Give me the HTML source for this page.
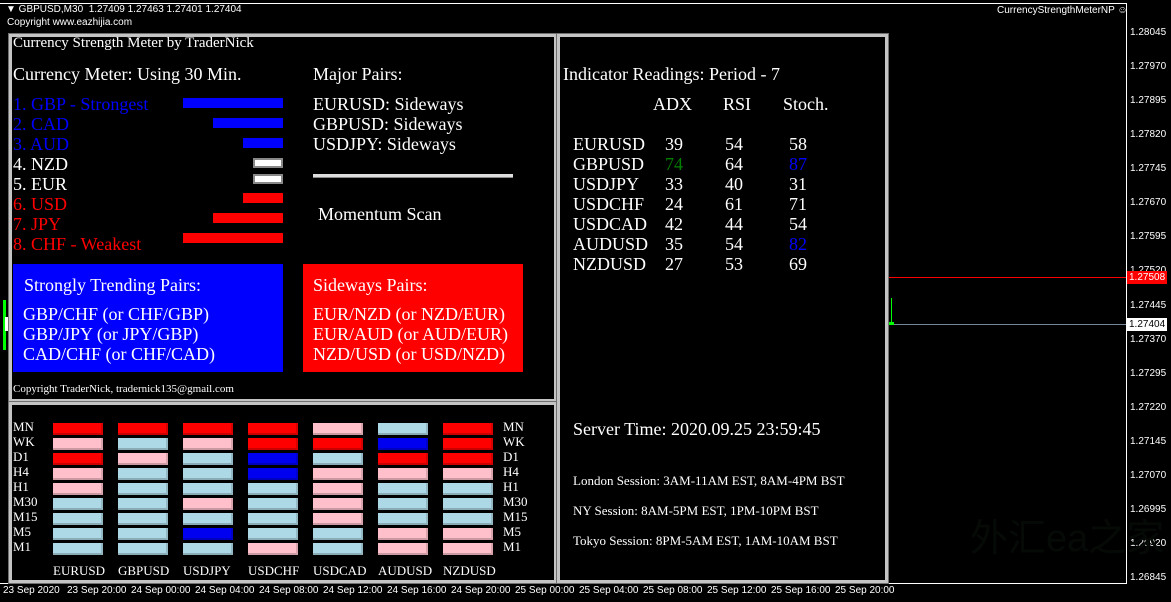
<!DOCTYPE html>
<html><head><meta charset="utf-8"><style>
*{margin:0;padding:0;box-sizing:border-box}
body{width:1171px;height:602px;background:#000;position:relative;overflow:hidden;font-family:"Liberation Serif",serif;color:#fff}
.a{position:absolute;white-space:nowrap;line-height:1}
.s{font-family:"Liberation Sans",sans-serif;font-size:10px}
.f18{font-size:18px}
.p{position:absolute;border:3px solid #c4c4c4;box-shadow:0 0 0 1px #707070}
.b{position:absolute;height:12px;width:50px;border-bottom:2px solid rgba(0,0,0,.2);border-right:2px solid rgba(0,0,0,.15)}
.r{background:#f00}.k{background:#ffc0cb}.l{background:#add8e6}.u{background:#0000f0}
.lab{font-size:13px}
.pl{position:absolute;left:1130px;font-family:"Liberation Sans",sans-serif;font-size:10px;line-height:1}
</style></head><body>
<div style="position:absolute;left:0;top:3px;width:1127px;height:581px;border:1px solid #fff;border-left:none"></div>
<div class="a s" style="left:6px;top:5px">▼ GBPUSD,M30&nbsp; 1.27409 1.27463 1.27401 1.27404</div>
<div class="a s" style="left:7px;top:18px">Copyright www.eazhijia.com</div>
<div class="a s" style="left:997px;top:6px">CurrencyStrengthMeterNP ☺</div>
<div style="position:absolute;left:888px;top:277px;width:238px;height:1px;background:#f00"></div>
<div style="position:absolute;left:888px;top:324px;width:238px;height:1px;background:#778899"></div>
<div style="position:absolute;left:891px;top:298px;width:1px;height:26px;background:#0f0"></div>
<div style="position:absolute;left:889px;top:322px;width:5px;height:3px;background:#0f0"></div>
<div style="position:absolute;left:3px;top:300px;width:3px;height:50px;background:#0f0"></div>
<div style="position:absolute;left:5px;top:317px;width:4px;height:14px;background:#fff"></div>
<div class="pl" style="top:28px">1.28045</div><div class="pl" style="top:62px">1.27970</div><div class="pl" style="top:96px">1.27895</div><div class="pl" style="top:130px">1.27820</div><div class="pl" style="top:164px">1.27745</div><div class="pl" style="top:198px">1.27670</div><div class="pl" style="top:232px">1.27595</div><div class="pl" style="top:301px">1.27445</div><div class="pl" style="top:335px">1.27370</div><div class="pl" style="top:369px">1.27295</div><div class="pl" style="top:403px">1.27220</div><div class="pl" style="top:437px">1.27145</div><div class="pl" style="top:471px">1.27070</div><div class="pl" style="top:505px">1.26995</div><div class="pl" style="top:539px">1.26920</div><div class="pl" style="top:573px">1.26845</div>
<div class="pl" style="top:266px">1.27520</div>
<div class="pl" style="top:271px;left:1127px;width:40px;height:13px;background:#f00;padding:2px 0 0 2px">1.27508</div>
<div class="pl" style="top:318px;left:1127px;width:40px;height:13px;background:#fff;color:#000;padding:2px 0 0 2px">1.27404</div>
<div class="a s" style="left:3px;top:586px">23 Sep 2020</div>
<div class="a s" style="left:67px;top:586px">23 Sep 20:00</div>
<div class="a s" style="left:131px;top:586px">24 Sep 00:00</div>
<div class="a s" style="left:195px;top:586px">24 Sep 04:00</div>
<div class="a s" style="left:259px;top:586px">24 Sep 08:00</div>
<div class="a s" style="left:323px;top:586px">24 Sep 12:00</div>
<div class="a s" style="left:387px;top:586px">24 Sep 16:00</div>
<div class="a s" style="left:451px;top:586px">24 Sep 20:00</div>
<div class="a s" style="left:515px;top:586px">25 Sep 00:00</div>
<div class="a s" style="left:579px;top:586px">25 Sep 04:00</div>
<div class="a s" style="left:643px;top:586px">25 Sep 08:00</div>
<div class="a s" style="left:707px;top:586px">25 Sep 12:00</div>
<div class="a s" style="left:771px;top:586px">25 Sep 16:00</div>
<div class="a s" style="left:835px;top:586px">25 Sep 20:00</div>
<div class="a" style="left:970px;top:520px;font-size:38px;color:#060a06;font-family:'Liberation Sans','Noto Sans CJK SC',sans-serif">外汇ea之家</div>
<div class="p" style="left:9px;top:34px;width:548px;height:368px;background:#000"></div>
<div class="p" style="left:9px;top:402px;width:548px;height:181px;background:#000"></div>
<div class="p" style="left:557px;top:34px;width:331px;height:549px;background:#000"></div>
<div class="a" style="left:13px;top:36px;font-size:15px">Currency Strength Meter by TraderNick</div>
<div class="a f18" style="left:13px;top:65px">Currency Meter: Using 30 Min.</div>
<div class="a f18" style="left:313px;top:65px">Major Pairs:</div>
<div class="a f18" style="left:13px;top:95px;color:#00f">1. GBP - Strongest</div>
<div class="a f18" style="left:13px;top:115px;color:#00f">2. CAD</div>
<div class="a f18" style="left:13px;top:135px;color:#00f">3. AUD</div>
<div class="a f18" style="left:13px;top:155px">4. NZD</div>
<div class="a f18" style="left:13px;top:175px">5. EUR</div>
<div class="a f18" style="left:13px;top:195px;color:#f00">6. USD</div>
<div class="a f18" style="left:13px;top:215px;color:#f00">7. JPY</div>
<div class="a f18" style="left:13px;top:235px;color:#f00">8. CHF - Weakest</div>
<div style="position:absolute;left:183px;top:98px;width:100px;height:10px;background:#00f"></div>
<div style="position:absolute;left:213px;top:118px;width:70px;height:10px;background:#00f"></div>
<div style="position:absolute;left:243px;top:138px;width:40px;height:10px;background:#00f"></div>
<div style="position:absolute;left:253px;top:158px;width:30px;height:10px;background:#fff;border:2px solid #888"></div>
<div style="position:absolute;left:253px;top:174px;width:30px;height:10px;background:#fff;border:2px solid #888"></div>
<div style="position:absolute;left:243px;top:193px;width:40px;height:10px;background:#f00"></div>
<div style="position:absolute;left:213px;top:213px;width:70px;height:10px;background:#f00"></div>
<div style="position:absolute;left:183px;top:233px;width:100px;height:10px;background:#f00"></div>
<div class="a f18" style="left:313px;top:95px">EURUSD: Sideways</div>
<div class="a f18" style="left:313px;top:115px">GBPUSD: Sideways</div>
<div class="a f18" style="left:313px;top:135px">USDJPY: Sideways</div>
<div style="position:absolute;left:313px;top:174px;width:200px;height:4px;background:#ddd;border-bottom:1px solid #888"></div>
<div class="a f18" style="left:318px;top:205px">Momentum Scan</div>
<div style="position:absolute;left:13px;top:264px;width:270px;height:108px;background:#00f"></div>
<div style="position:absolute;left:303px;top:264px;width:220px;height:108px;background:#f00"></div>
<div class="a f18" style="left:24px;top:276px">Strongly Trending Pairs:</div>
<div class="a f18" style="left:23px;top:305px">GBP/CHF (or CHF/GBP)</div>
<div class="a f18" style="left:23px;top:325px">GBP/JPY (or JPY/GBP)</div>
<div class="a f18" style="left:23px;top:345px">CAD/CHF (or CHF/CAD)</div>
<div class="a f18" style="left:313px;top:276px">Sideways Pairs:</div>
<div class="a f18" style="left:313px;top:305px">EUR/NZD (or NZD/EUR)</div>
<div class="a f18" style="left:313px;top:325px">EUR/AUD (or AUD/EUR)</div>
<div class="a f18" style="left:313px;top:345px">NZD/USD (or USD/NZD)</div>
<div class="a" style="left:13px;top:384px;font-size:11px">Copyright TraderNick, tradernick135@gmail.com</div>
<div class="a lab" style="left:13px;top:419px;line-height:15px">MN<br>WK<br>D1<br>H4<br>H1<br>M30<br>M15<br>M5<br>M1</div>
<div class="a lab" style="left:503px;top:419px;line-height:15px">MN<br>WK<br>D1<br>H4<br>H1<br>M30<br>M15<br>M5<br>M1</div>
<div class="a lab" style="left:53px;top:564px">EURUSD</div><div class="a lab" style="left:118px;top:564px">GBPUSD</div><div class="a lab" style="left:183px;top:564px">USDJPY</div><div class="a lab" style="left:248px;top:564px">USDCHF</div><div class="a lab" style="left:313px;top:564px">USDCAD</div><div class="a lab" style="left:378px;top:564px">AUDUSD</div><div class="a lab" style="left:443px;top:564px">NZDUSD</div>
<div class="b r" style="left:53px;top:423px"></div><div class="b k" style="left:53px;top:438px"></div><div class="b r" style="left:53px;top:453px"></div><div class="b k" style="left:53px;top:468px"></div><div class="b k" style="left:53px;top:483px"></div><div class="b l" style="left:53px;top:498px"></div><div class="b l" style="left:53px;top:513px"></div><div class="b l" style="left:53px;top:528px"></div><div class="b l" style="left:53px;top:543px"></div>
<div class="b r" style="left:118px;top:423px"></div><div class="b l" style="left:118px;top:438px"></div><div class="b k" style="left:118px;top:453px"></div><div class="b l" style="left:118px;top:468px"></div><div class="b l" style="left:118px;top:483px"></div><div class="b l" style="left:118px;top:498px"></div><div class="b l" style="left:118px;top:513px"></div><div class="b l" style="left:118px;top:528px"></div><div class="b l" style="left:118px;top:543px"></div>
<div class="b r" style="left:183px;top:423px"></div><div class="b k" style="left:183px;top:438px"></div><div class="b l" style="left:183px;top:453px"></div><div class="b l" style="left:183px;top:468px"></div><div class="b l" style="left:183px;top:483px"></div><div class="b k" style="left:183px;top:498px"></div><div class="b l" style="left:183px;top:513px"></div><div class="b u" style="left:183px;top:528px"></div><div class="b l" style="left:183px;top:543px"></div>
<div class="b r" style="left:248px;top:423px"></div><div class="b r" style="left:248px;top:438px"></div><div class="b u" style="left:248px;top:453px"></div><div class="b u" style="left:248px;top:468px"></div><div class="b l" style="left:248px;top:483px"></div><div class="b l" style="left:248px;top:498px"></div><div class="b l" style="left:248px;top:513px"></div><div class="b l" style="left:248px;top:528px"></div><div class="b k" style="left:248px;top:543px"></div>
<div class="b k" style="left:313px;top:423px"></div><div class="b r" style="left:313px;top:438px"></div><div class="b l" style="left:313px;top:453px"></div><div class="b k" style="left:313px;top:468px"></div><div class="b k" style="left:313px;top:483px"></div><div class="b k" style="left:313px;top:498px"></div><div class="b k" style="left:313px;top:513px"></div><div class="b l" style="left:313px;top:528px"></div><div class="b l" style="left:313px;top:543px"></div>
<div class="b l" style="left:378px;top:423px"></div><div class="b u" style="left:378px;top:438px"></div><div class="b r" style="left:378px;top:453px"></div><div class="b k" style="left:378px;top:468px"></div><div class="b l" style="left:378px;top:483px"></div><div class="b l" style="left:378px;top:498px"></div><div class="b l" style="left:378px;top:513px"></div><div class="b k" style="left:378px;top:528px"></div><div class="b k" style="left:378px;top:543px"></div>
<div class="b r" style="left:443px;top:423px"></div><div class="b r" style="left:443px;top:438px"></div><div class="b r" style="left:443px;top:453px"></div><div class="b k" style="left:443px;top:468px"></div><div class="b l" style="left:443px;top:483px"></div><div class="b l" style="left:443px;top:498px"></div><div class="b l" style="left:443px;top:513px"></div><div class="b k" style="left:443px;top:528px"></div><div class="b k" style="left:443px;top:543px"></div>
<div class="a f18" style="left:563px;top:65px">Indicator Readings: Period - 7</div>
<div class="a f18" style="left:653px;top:95px">ADX</div>
<div class="a f18" style="left:723px;top:95px">RSI</div>
<div class="a f18" style="left:783px;top:95px">Stoch.</div>
<div class="a f18" style="left:573px;top:134px;line-height:20px">EURUSD<br>GBPUSD<br>USDJPY<br>USDCHF<br>USDCAD<br>AUDUSD<br>NZDUSD</div>
<div class="a f18" style="left:665px;top:134px;line-height:20px">39<br><span style="color:#008000">74</span><br>33<br>24<br>42<br>35<br>27</div>
<div class="a f18" style="left:725px;top:134px;line-height:20px">54<br>64<br>40<br>61<br>44<br>54<br>53</div>
<div class="a f18" style="left:789px;top:134px;line-height:20px">58<br><span style="color:#00f">87</span><br>31<br>71<br>54<br><span style="color:#00f">82</span><br>69</div>
<div class="a f18" style="left:573px;top:420px">Server Time: 2020.09.25 23:59:45</div>
<div class="a" style="left:573px;top:474px;font-size:13px">London Session: 3AM-11AM EST, 8AM-4PM BST</div>
<div class="a" style="left:573px;top:504px;font-size:13px">NY Session: 8AM-5PM EST, 1PM-10PM BST</div>
<div class="a" style="left:573px;top:534px;font-size:13px">Tokyo Session: 8PM-5AM EST, 1AM-10AM BST</div>
</body></html>
